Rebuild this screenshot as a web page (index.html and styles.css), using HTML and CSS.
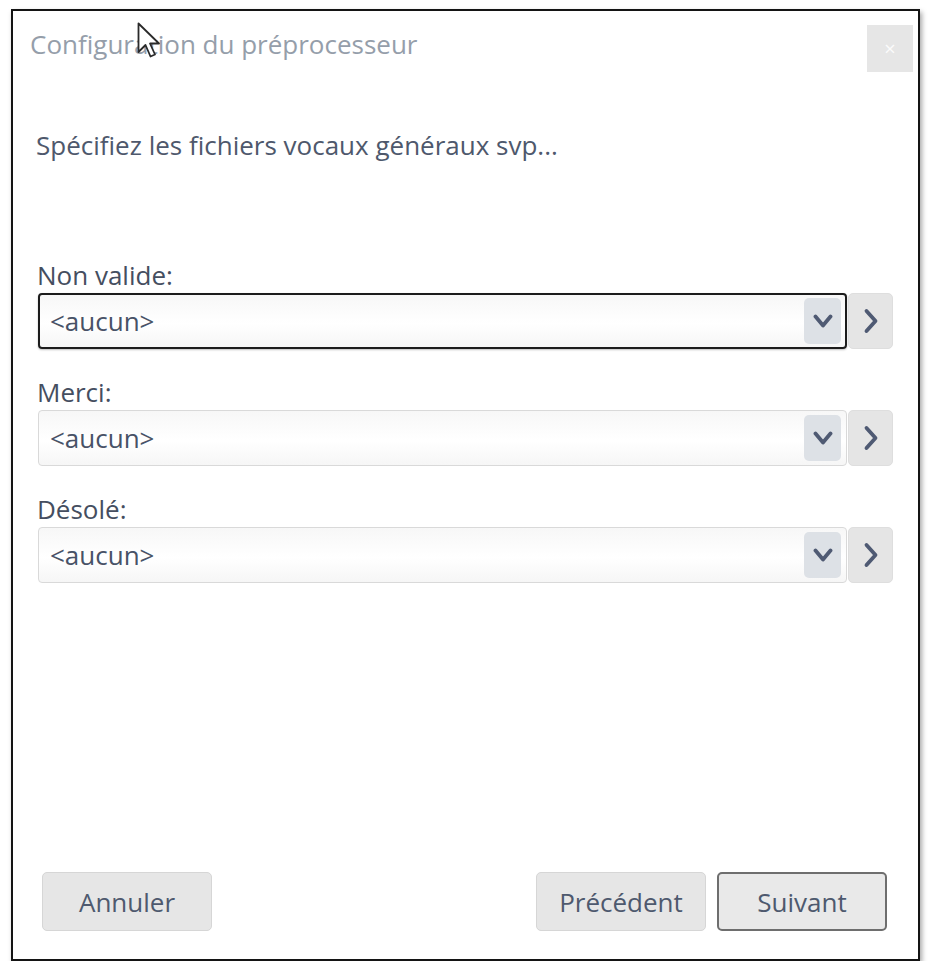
FILE: index.html
```html
<!DOCTYPE html>
<html lang="fr">

<head>
  <meta charset="UTF-8" />
  <meta name="viewport" content="width=device-width, initial-scale=1.0" />
  <title>Configuration du préprocesseur</title>
  <link rel="stylesheet" href="styles.css">
</head>

<body>
  <div class="dialog">
    <div class="dialog_header">
      <h1 class="dialog_title">Configuration du préprocesseur</h1>
      <button class="close_button" type="button">&times;</button>
    </div>

    <p class="intro">Spécifiez les fichiers vocaux généraux svp...</p>

    <div class="fields">
      <div class="field">
        <label class="field_label" for="invalid">Non valide:</label>
        <div class="field_row">
          <div class="combo combo_focused" id="invalid">
            <span class="combo_value">&lt;aucun&gt;</span>
            <span class="combo_drop">
              <svg width="20" height="14" viewBox="0 0 20 14"><path d="M2.5 2.5 L10 11.5 L17.5 2.5" /></svg>
            </span>
          </div>
          <button class="next_button" type="button">
            <svg width="16" height="26" viewBox="0 0 16 26"><path d="M3.5 3 L12.5 13 L3.5 23" /></svg>
          </button>
        </div>
      </div>

      <div class="field">
        <label class="field_label" for="thanks">Merci:</label>
        <div class="field_row">
          <div class="combo" id="thanks">
            <span class="combo_value">&lt;aucun&gt;</span>
            <span class="combo_drop">
              <svg width="20" height="14" viewBox="0 0 20 14"><path d="M2.5 2.5 L10 11.5 L17.5 2.5" /></svg>
            </span>
          </div>
          <button class="next_button" type="button">
            <svg width="16" height="26" viewBox="0 0 16 26"><path d="M3.5 3 L12.5 13 L3.5 23" /></svg>
          </button>
        </div>
      </div>

      <div class="field">
        <label class="field_label" for="sorry">Désolé:</label>
        <div class="field_row">
          <div class="combo" id="sorry">
            <span class="combo_value">&lt;aucun&gt;</span>
            <span class="combo_drop">
              <svg width="20" height="14" viewBox="0 0 20 14"><path d="M2.5 2.5 L10 11.5 L17.5 2.5" /></svg>
            </span>
          </div>
          <button class="next_button" type="button">
            <svg width="16" height="26" viewBox="0 0 16 26"><path d="M3.5 3 L12.5 13 L3.5 23" /></svg>
          </button>
        </div>
      </div>
    </div>

    <div class="dialog_footer">
      <button class="footer_button" type="button">Annuler</button>
      <div class="footer_right">
        <button class="footer_button" type="button">Précédent</button>
        <button class="footer_button footer_button_default" type="button">Suivant</button>
      </div>
    </div>

    <!-- mouse pointer caught in the screenshot -->
    <svg class="pointer" width="24" height="38" viewBox="0 0 24 38">
      <path d="M1.5 1.5 L1.5 30 L8.5 23 L13.5 34.5 L18 32.5 L13 21.5 L22 21.5 Z" />
    </svg>
  </div>
</body>

</html>
```

FILE: styles.css
```css
body {
  font-family: "Open Sans", "Noto Sans", sans-serif;
  margin: 0;
  background: #fff;
}

.dialog {
  position: relative;
  box-sizing: border-box;
  width: 909px;
  height: 952px;
  margin: 9px 0 0 11px;
  border: 2px solid #141414;
  box-shadow: 2px 3px 5px rgba(0, 0, 0, 0.35);
  background: #fff;
  display: flex;
  flex-direction: column;
}

.dialog_header {
  display: flex;
  justify-content: space-between;
  align-items: flex-start;
  padding: 14px 5px 0 17px;
}

.dialog_title {
  margin: 1px 0 0;
  font-size: 26px;
  line-height: 36px;
  font-weight: 400;
  color: #959eaa;
}

.close_button {
  width: 46px;
  height: 47px;
  border: none;
  background: #e6e6e6;
  color: #fbfbfb;
  font-family: "Open Sans", sans-serif;
  font-size: 20px;
  padding: 0;
}

.intro {
  margin: 55px 0 0;
  padding-left: 23px;
  font-size: 26px;
  line-height: 36px;
  color: #4e586c;
}

.fields {
  margin-top: 94px;
  padding: 0 25px 0 24px;
  display: flex;
  flex-direction: column;
  gap: 25px;
}

.field_label {
  display: block;
  font-size: 26px;
  line-height: 36px;
  color: #454e60;
}

.field_row {
  display: flex;
  gap: 1px;
  padding-left: 1px;
}

.combo {
  box-sizing: border-box;
  flex: 1;
  height: 56px;
  border: 1px solid #d9d9d9;
  border-radius: 4px;
  background: linear-gradient(#f7f7f7, #ffffff 55%, #f6f6f6);
  display: flex;
  align-items: center;
  justify-content: space-between;
  padding: 0 5px 0 11px;
}

.combo_focused {
  border: 2px solid #1c1c1c;
  padding: 0 4px 0 10px;
  box-shadow: 0 1px 2px rgba(0, 0, 0, 0.25);
}

.combo_value {
  font-size: 26px;
  line-height: 36px;
  color: #485267;
}

.combo_drop {
  width: 37px;
  height: 46px;
  border-radius: 5px;
  background: #dde1e6;
  display: flex;
  align-items: center;
  justify-content: center;
}

.combo_drop path,
.next_button path {
  fill: none;
  stroke: #4f5a73;
  stroke-width: 3.8;
  stroke-linecap: round;
  stroke-linejoin: round;
}

.next_button {
  box-sizing: border-box;
  width: 45px;
  height: 56px;
  border: 1px solid #dedede;
  border-radius: 5px;
  background: #e5e5e5;
  padding: 0;
  display: flex;
  align-items: center;
  justify-content: center;
}

.dialog_footer {
  margin-top: auto;
  display: flex;
  justify-content: space-between;
  padding: 0 31px 28px 29px;
}

.footer_right {
  display: flex;
  gap: 11px;
}

.footer_button {
  box-sizing: border-box;
  width: 170px;
  height: 59px;
  border: 1px solid #d6d6d6;
  border-radius: 5px;
  background: #e6e6e6;
  font-family: "Open Sans", sans-serif;
  font-size: 26px;
  line-height: 36px;
  color: #4e596e;
  padding: 0;
}

.footer_button_default {
  border: 2px solid #6e6e6e;
  background: #e9e9e9;
}

.pointer {
  position: absolute;
  left: 124px;
  top: 11px;
}

.pointer path {
  fill: #fff;
  stroke: #2a2a2a;
  stroke-width: 1.8;
  stroke-linejoin: round;
}
```
